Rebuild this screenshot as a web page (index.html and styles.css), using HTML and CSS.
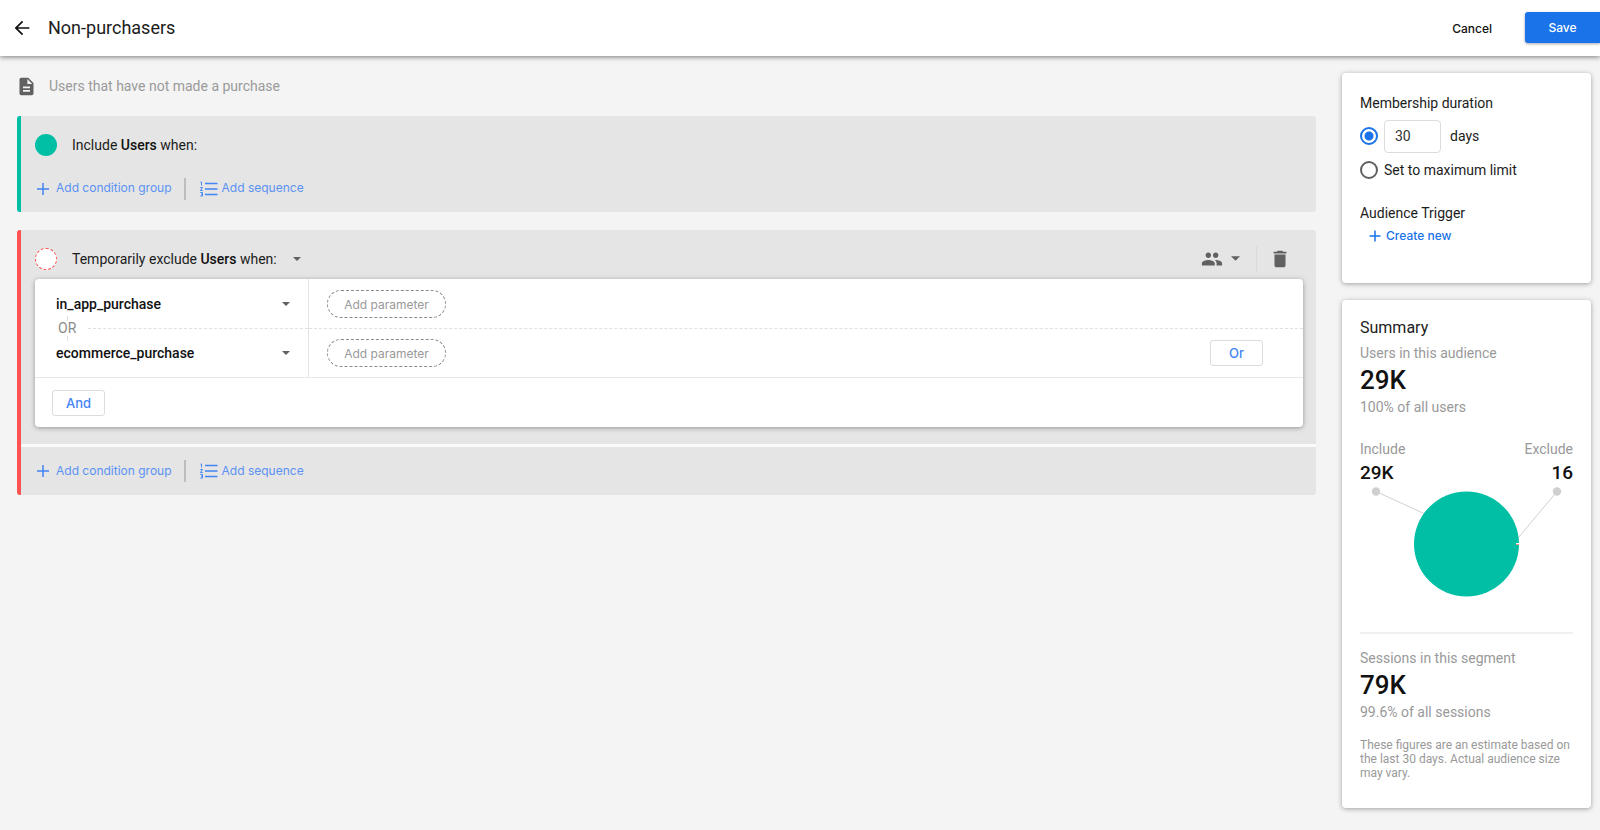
FILE: index.html
```html
<!DOCTYPE html>
<html lang="en">
<head>
  <meta charset="UTF-8" />
  <meta name="viewport" content="width=device-width, initial-scale=1" />
  <title>Non-purchasers</title>
  <link rel="stylesheet" href="styles.css">
</head>
<body>
  <header class="topbar">
    <button class="icon-btn back" type="button" aria-label="Back">
      <svg width="22" height="22" viewBox="0 0 24 24"><path d="M20 11.200H7.500l5.800-5.800L12 4l-8 8 8 8 1.300-1.400L7.500 12.800H20z"/></svg>
    </button>
    <h1>Non-purchasers</h1>
    <button class="cancel" type="button">Cancel</button>
    <button class="save" type="button">Save</button>
  </header>

  <div class="layout">
    <main>
      <div class="description">
        <svg width="21" height="21" viewBox="0 0 24 24"><path d="M14 2H6c-1.100 0-2 .9-2 2v16c0 1.100.9 2 2 2h12c1.100 0 2-.9 2-2V8l-6-6zm2 16H8v-2h8v2zm0-4H8v-2h8v2zm-3-5V3.500L18.500 9H13z"/></svg>
        <p>Users that have not made a purchase</p>
      </div>

      <section class="block include">
        <div class="block-head">
          <span class="dot"></span>
          <h2>Include <b>Users</b> when:</h2>
        </div>
        <div class="actions">
          <button class="add" type="button">
            <svg width="14" height="14" viewBox="0 0 14 14"><path d="M7 1v12M1 7h12"/></svg>
            <span>Add condition group</span>
          </button>
          <button class="add sequence" type="button">
            <svg width="18" height="16" viewBox="0 0 18 16"><path d="M5 2.500h12.500M5 8h12.500M5 13.500h12.500"/><path class="digits" d="M.5 1h1v3.500M.3 6.500h2.200L.5 9.500h2.200M.3 11.500h2.200v3.500H.3M1 13.200h1.500"/></svg>
            <span>Add sequence</span>
          </button>
        </div>
      </section>

      <section class="block exclude">
        <div class="block-head">
          <span class="dot"></span>
          <button class="icon-btn kind" type="button" aria-haspopup="listbox">
            <span>Temporarily exclude <b>Users</b> when:</span>
            <svg width="8" height="4" viewBox="0 0 8 4"><path d="M0 0h8L4 4z"/></svg>
          </button>
          <div class="tools">
            <button class="icon-btn scope" type="button" aria-label="Scope">
              <svg width="22" height="22" viewBox="0 0 24 24"><path d="M16 11c1.660 0 2.990-1.340 2.990-3S17.660 5 16 5s-3 1.340-3 3 1.340 3 3 3zm-8 0c1.660 0 2.990-1.340 2.990-3S9.660 5 8 5 5 6.340 5 8s1.340 3 3 3zm0 2c-2.330 0-7 1.170-7 3.500V19h14v-2.500c0-2.330-4.670-3.500-7-3.500zm8 0c-.29 0-.62.020-.97.050 1.160.84 1.970 1.970 1.970 3.450V19h6v-2.500c0-2.330-4.670-3.500-7-3.500z"/></svg>
              <svg width="9" height="5" viewBox="0 0 8 4"><path d="M0 0h8L4 4z"/></svg>
            </button>
            <button class="icon-btn trash" type="button" aria-label="Delete group">
              <svg width="22" height="22" viewBox="0 0 24 24"><path d="M6 19c0 1.100.9 2 2 2h8c1.100 0 2-.9 2-2V7H6v12zM19 4h-3.500l-1-1h-5l-1 1H5v2h14V4z"/></svg>
            </button>
          </div>
        </div>

        <div class="card conditions">
          <div class="conditions-body">
            <div class="events">
              <label class="event">
                <select aria-label="First event"><option>in_app_purchase</option></select>
                <svg width="8" height="4" viewBox="0 0 8 4"><path d="M0 0h8L4 4z"/></svg>
              </label>
              <div class="divider"><span class="or-label">OR</span></div>
              <label class="event">
                <select aria-label="Second event"><option>ecommerce_purchase</option></select>
                <svg width="8" height="4" viewBox="0 0 8 4"><path d="M0 0h8L4 4z"/></svg>
              </label>
            </div>
            <div class="params">
              <div class="param-row"><button class="pill" type="button">Add parameter</button></div>
              <div class="divider"></div>
              <div class="param-row">
                <button class="pill" type="button">Add parameter</button>
                <button class="logic" type="button">Or</button>
              </div>
            </div>
          </div>
          <div class="conditions-foot"><button class="logic" type="button">And</button></div>
        </div>

        <div class="actions">
          <button class="add" type="button">
            <svg width="14" height="14" viewBox="0 0 14 14"><path d="M7 1v12M1 7h12"/></svg>
            <span>Add condition group</span>
          </button>
          <button class="add sequence" type="button">
            <svg width="18" height="16" viewBox="0 0 18 16"><path d="M5 2.500h12.500M5 8h12.500M5 13.500h12.500"/><path class="digits" d="M.5 1h1v3.500M.3 6.500h2.200L.5 9.500h2.200M.3 11.500h2.200v3.500H.3M1 13.200h1.500"/></svg>
            <span>Add sequence</span>
          </button>
        </div>
      </section>
    </main>

    <aside>
      <section class="card panel membership">
        <h3>Membership duration</h3>
        <div class="choice">
          <input type="radio" id="durationDays" name="duration" checked>
          <input type="text" id="days" value="30" aria-label="Number of days">
          <label for="durationDays">days</label>
        </div>
        <div class="choice">
          <input type="radio" id="durationMax" name="duration">
          <label for="durationMax">Set to maximum limit</label>
        </div>
        <h3 class="trigger">Audience Trigger</h3>
        <button class="add create" type="button">
          <svg width="12" height="12" viewBox="0 0 12 12"><path d="M6 .5v11M.5 6h11"/></svg>
          <span>Create new</span>
        </button>
      </section>

      <section class="card panel summary">
        <h3>Summary</h3>
        <p>Users in this audience</p>
        <strong>29K</strong>
        <p>100% of all users</p>

        <div class="split">
          <div><p>Include</p><b>29K</b></div>
          <div><p>Exclude</p><b>16</b></div>
        </div>
        <svg class="pie" viewBox="0 0 213 112">
          <path class="leader" d="M16 5.500L64 27.500M197 5.500L158 52"/>
          <circle class="end" cx="16" cy="5.500" r="4.200"/>
          <circle class="end" cx="197" cy="5.500" r="4.200"/>
          <circle class="slice" cx="106.500" cy="58" r="52.500"/>
          <path d="M156 57h3v1h-3z" fill="#fff"/>
          <path d="M156 58h3v1h-3z" fill="#ff8a80"/>
        </svg>

        <hr>
        <p>Sessions in this segment</p>
        <strong>79K</strong>
        <p>99.6% of all sessions</p>
        <small>These figures are an estimate based on the last 30 days. Actual audience size may vary.</small>
      </section>
    </aside>
  </div>
</body>
</html>
```
FILE: styles.css
```css
* {
  box-sizing: border-box;
}

body {
  margin: 0;
  background: #f4f4f4;
  color: #1c1c1c;
  font-family: Roboto, sans-serif;
  font-size: 14px;
  line-height: 20px;
}

h1, h2, h3, p {
  margin: 0;
  font-size: 14px;
  font-weight: 400;
}

b, strong {
  font-weight: 500;
  color: #111;
}

svg {
  display: block;
  flex: none;
}

button {
  border: 0;
  padding: 0;
  background: none;
  font-family: Inter, sans-serif;
  font-size: 12px;
  cursor: pointer;
}

.icon-btn {
  display: flex;
  align-items: center;
  color: inherit;
  fill: #616161;
}

.card {
  background: #fff;
  border-radius: 4px;
  box-shadow: 0 1px 5px rgba(0, 0, 0, 0.35);
}

/* top bar */
.topbar {
  position: relative;
  display: flex;
  align-items: center;
  height: 56px;
  padding-left: 11px;
  background: #fff;
  box-shadow: 0 1px 5px rgba(0, 0, 0, 0.5);
}

.back {
  fill: #111;
}

.topbar h1 {
  flex: 1;
  margin-left: 15px;
  font-size: 18px;
}

.cancel {
  margin-right: 33px;
  color: #111;
  font-weight: 500;
}

.save {
  width: 75px;
  height: 31px;
  margin-bottom: 1px;
  border-radius: 3px 0 0 3px;
  background: #1a73e8;
  color: #fff;
  font-weight: 500;
  box-shadow: 0 1px 3px rgba(0, 0, 0, 0.35);
}

.layout {
  display: grid;
  grid-template-columns: minmax(0, 1fr) 249px;
  gap: 26px;
  padding: 17px 9px 22px 17px;
}

.description {
  display: flex;
  align-items: center;
  gap: 12px;
  height: 26px;
  margin-bottom: 17px;
  color: #9a9a9a;
  fill: #616161;
}

.description svg {
  margin-left: -1px;
}

/* include / exclude blocks */
.block {
  margin-bottom: 18px;
  border-left: 4px solid #00bfa5;
  border-radius: 3px;
  background: #e5e5e5;
}

.exclude {
  border-color: #ff5252;
}

.block-head {
  display: flex;
  align-items: center;
  gap: 15px;
  height: 49px;
  padding: 8px 13px 0 14px;
}

.kind {
  gap: 16px;
  font-family: Roboto, sans-serif;
  font-size: 14px;
}

.dot {
  width: 22px;
  height: 22px;
  border-radius: 50%;
  background: #00bfa5;
}

.exclude .dot {
  border: 1px dashed #ff5252;
  background: #fff;
}

.tools {
  display: flex;
  align-items: center;
  margin-left: auto;
}

.scope {
  gap: 8px;
  padding-right: 16px;
}

.trash {
  height: 26px;
  padding: 0 12px;
  border-left: 1px solid #dadada;
}

.actions {
  display: flex;
  align-items: center;
  height: 47px;
  padding-left: 15px;
}

.add {
  display: flex;
  align-items: center;
  gap: 6px;
  color: #5a92f4;
  stroke: #4285f4;
  stroke-width: 1.500;
  fill: none;
}

.add span {
  padding-bottom: 2px;
}

.sequence {
  height: 22px;
  margin-left: 12px;
  padding-left: 14px;
  border-left: 2px solid #bdbdbd;
  gap: 4px;
}

.digits {
  stroke-width: 1;
}

/* conditions card */
.conditions {
  margin: 0 13px 17px 14px;
}

.exclude .actions {
  height: 51px;
  border-top: 3px solid #fafafa;
}

.conditions-body {
  display: grid;
  grid-template-columns: 274px 1fr;
  border-bottom: 1px solid #e8e8e8;
}

.events, .params {
  padding: 11px 0 10px;
}

.events {
  border-right: 1px solid #e4e4e4;
}

.event {
  display: flex;
  align-items: center;
  height: 28px;
  padding: 0 18px 0 21px;
  fill: #616161;
}

.event select {
  flex: 1;
  padding: 0;
  border: 0;
  background: none;
  appearance: none;
  color: #111;
  font-family: Roboto, sans-serif;
  font-size: 14px;
  font-weight: 500;
}

.divider {
  display: flex;
  align-items: center;
  height: 21px;
}

.divider::after {
  content: "";
  flex: 1;
  border-top: 1px dashed #e0e0e0;
}

.or-label {
  display: flex;
  flex-direction: column;
  align-items: center;
  margin: 0 12px 0 23px;
  color: #8a8a8a;
  line-height: 15px;
}

.or-label::before, .or-label::after {
  content: "";
  height: 5px;
  border-left: 1px solid #e0e0e0;
}

.param-row {
  display: flex;
  align-items: center;
  justify-content: space-between;
  height: 28px;
  padding: 0 40px 0 18px;
}

.pill {
  width: 119px;
  height: 28px;
  border: 1px dashed #8a8a8a;
  border-radius: 14px;
  color: #999;
}

.logic {
  width: 53px;
  height: 26px;
  border: 1px solid #dadce0;
  border-radius: 3px;
  color: #4285f4;
  font-size: 13px;
  font-weight: 500;
}

.conditions-foot {
  display: flex;
  padding: 12px 17px 11px;
}

/* side panels */
.panel {
  padding: 18px;
}

.membership {
  height: 210px;
  margin-bottom: 17px;
  padding-top: 20px;
}

.membership h3 {
  margin-bottom: 6px;
}

.choice {
  display: flex;
  align-items: center;
  height: 34px;
}

.choice input[type="radio"] {
  width: 18px;
  height: 18px;
  margin: 0 6px 0 0;
  border: 2px solid #616161;
  border-radius: 50%;
  appearance: none;
}

.choice input[type="radio"]:checked {
  border-color: #1a73e8;
  background: radial-gradient(circle, #1a73e8 4px, #fff 5px);
}

.choice input[type="text"] {
  width: 57px;
  height: 33px;
  margin-right: 9px;
  padding: 0 10px;
  border: 1px solid #dadce0;
  border-radius: 4px;
  color: #333;
  font-family: Roboto, sans-serif;
  font-size: 14px;
}

.membership .trigger {
  margin: 16px 0 0;
}

.create {
  height: 26px;
  margin-left: 9px;
  gap: 5px;
  color: #1a73e8;
  font-weight: 500;
}

.create svg {
  stroke: #1a73e8;
}

.summary {
  padding-bottom: 28px;
}

.summary p {
  color: #999;
}

.summary h3 {
  margin-bottom: 5px;
  font-size: 16px;
}

.summary strong {
  display: block;
  font-size: 26px;
  line-height: 34px;
}

.split {
  display: flex;
  justify-content: space-between;
  margin-top: 22px;
}

.split div:last-child {
  text-align: right;
}

.split b {
  display: block;
  font-size: 19px;
  line-height: 27px;
}

.pie {
  width: 100%;
}

.leader {
  stroke: #d0d0d0;
}

.end {
  fill: #cfcfcf;
}

.slice {
  fill: #00bfa5;
}

.summary hr {
  margin: 34px 0 14px;
  border: 0;
  border-top: 2px solid #f0f0f0;
}

.summary small {
  display: block;
  margin-top: 16px;
  color: #999;
  font-size: 12px;
  line-height: 14px;
}
```
